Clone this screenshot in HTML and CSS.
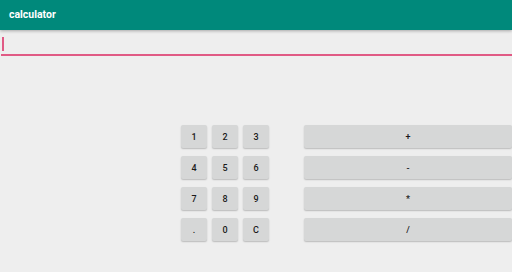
FILE: index.html
```html
<!DOCTYPE html>
<html>
<head>
<meta charset="utf-8">
<link rel="stylesheet" href="styles.css">
</head>
<body>
<div class="toolbar">calculator</div>
<div class="field"><span class="cursor"></span></div>
<div class="pad">
  <div class="nums">
    <button class="btn">1</button><button class="btn">2</button><button class="btn">3</button>
    <button class="btn">4</button><button class="btn">5</button><button class="btn">6</button>
    <button class="btn">7</button><button class="btn">8</button><button class="btn">9</button>
    <button class="btn">.</button><button class="btn">0</button><button class="btn">C</button>
  </div>
  <div class="ops">
    <button class="btn op">+</button>
    <button class="btn op">-</button>
    <button class="btn op">*</button>
    <button class="btn op">/</button>
  </div>
</div>
</body>
</html>
```
FILE: styles.css
```css
html, body { margin: 0; padding: 0; }
body {
  width: 512px; height: 272px; overflow: hidden;
  background: #eeeeee;
  font-family: Roboto, "Liberation Sans", sans-serif;
}
.toolbar {
  height: 30px;
  background: #00897b;
  color: #fff;
  font-weight: 700;
  font-size: 10.5px;
  line-height: 30px;
  padding-left: 9px;
  box-shadow: 0 1px 3px rgba(0,0,0,0.3);
  position: relative;
}
.field {
  margin: 7px 0 0 1px;
  height: 17px;
  border-bottom: 2px solid #e05a84;
  display: flex;
  align-items: flex-start;
}
.cursor {
  width: 1.5px;
  height: 14px;
  background: #e05a84;
  margin-left: 1px;
}
.pad {
  display: flex;
  margin: 69px 0 0 181px;
  gap: 35px;
}
.nums {
  display: grid;
  grid-template-columns: repeat(3, 26px);
  grid-auto-rows: 23px;
  column-gap: 5px;
  row-gap: 8px;
}
.ops {
  display: grid;
  grid-auto-rows: 23px;
  row-gap: 8px;
  width: 220px;
}
.btn {
  border: none;
  margin: 0; padding: 0;
  background: #d6d7d7;
  border-radius: 2px;
  box-shadow: 0 1px 1.5px rgba(0,0,0,0.22);
  font-family: Roboto, "Liberation Sans", sans-serif;
  font-size: 9px;
  font-weight: 500;
  color: #1a1a1a;
}
```
